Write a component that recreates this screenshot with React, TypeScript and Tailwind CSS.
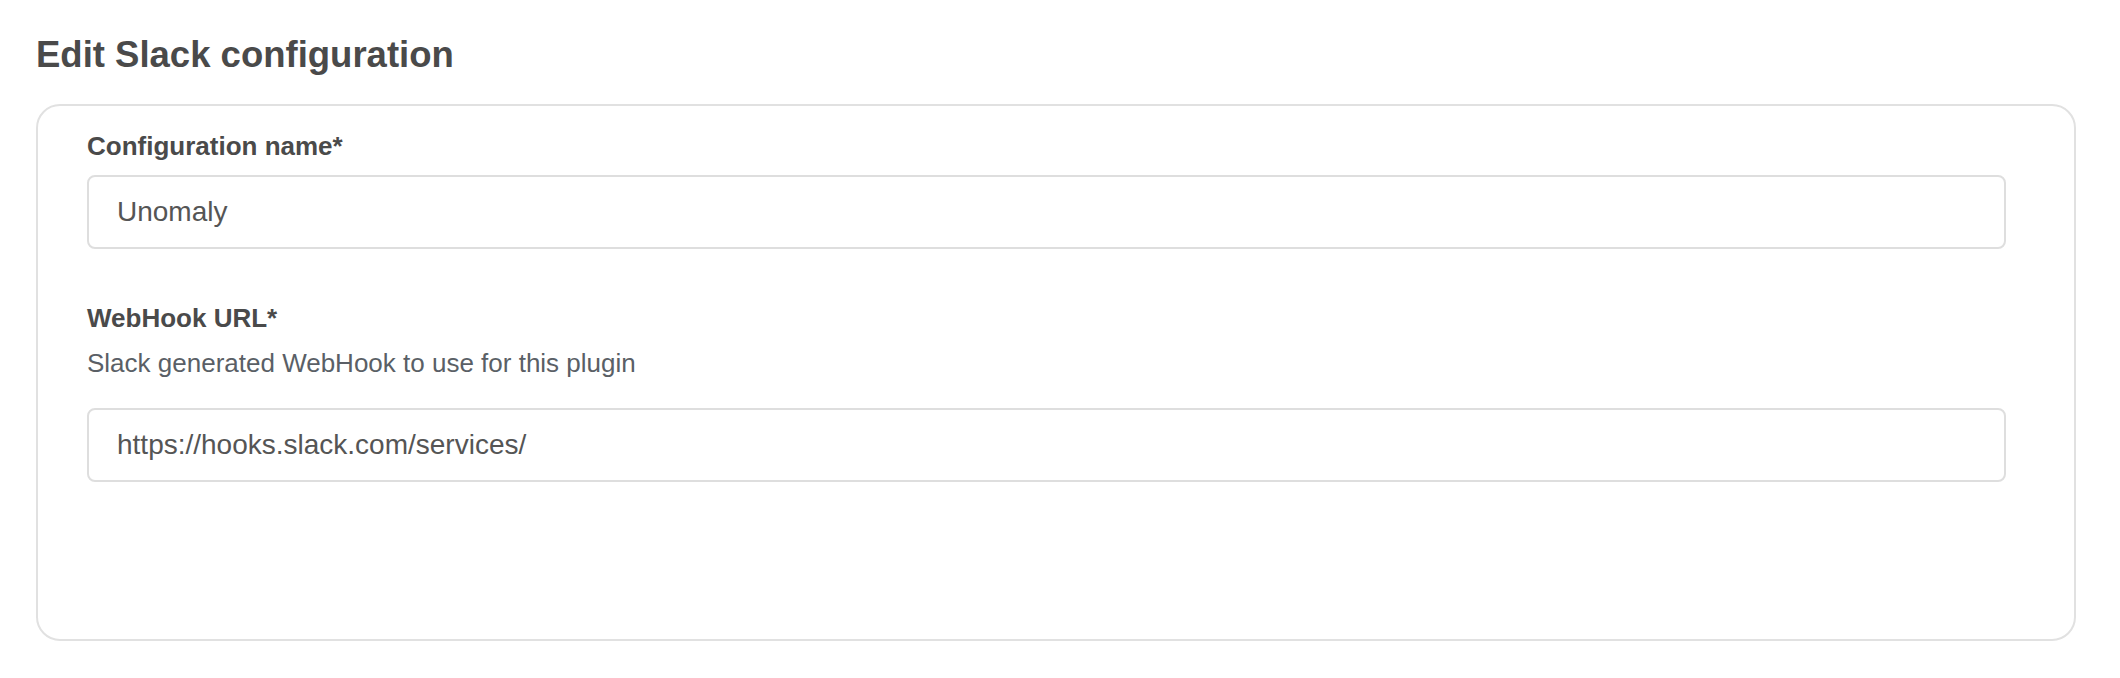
import React from "react";

function Field({
  label,
  hint,
  value,
}: {
  label: string;
  hint?: string;
  value: string;
}) {
  return (
    <div className="flex flex-col">
      <label className="text-[26px] leading-[30px] font-bold text-[#4a4a4a]">{label}</label>
      {hint && (
        <p className="mt-[15px] text-[26px] leading-[30px] text-[#5a5f66]">{hint}</p>
      )}
      <input
        readOnly
        value={value}
        className={`${hint ? "mt-[30px]" : "mt-[14px]"} h-[74px] w-full rounded-[8px] border-2 border-[#dedede] bg-white px-[28px] text-[28px] text-[#555555] outline-none`}
        style={{ fontFamily: '"Liberation Sans", Arial, sans-serif' }}
      />
    </div>
  );
}

export default function App() {
  return (
    <div
      className="min-h-screen bg-white pt-[35px] pl-[36px] pr-[44px]"
      style={{ fontFamily: '"Liberation Sans", Arial, sans-serif' }}
    >
      <h1 className="text-[36.5px] leading-[40px] font-bold text-[#4a4a4a]">Edit Slack configuration</h1>

      <div className="mt-[29px] rounded-[24px] border-2 border-[#e1e1e1] pt-[25px] pl-[49px] pr-[68px] pb-[157px]">
        <Field label="Configuration name*" value="Unomaly" />
        <div className="mt-[54px]">
          <Field
            label="WebHook URL*"
            hint="Slack generated WebHook to use for this plugin"
            value="https://hooks.slack.com/services/"
          />
        </div>
      </div>
    </div>
  );
}
